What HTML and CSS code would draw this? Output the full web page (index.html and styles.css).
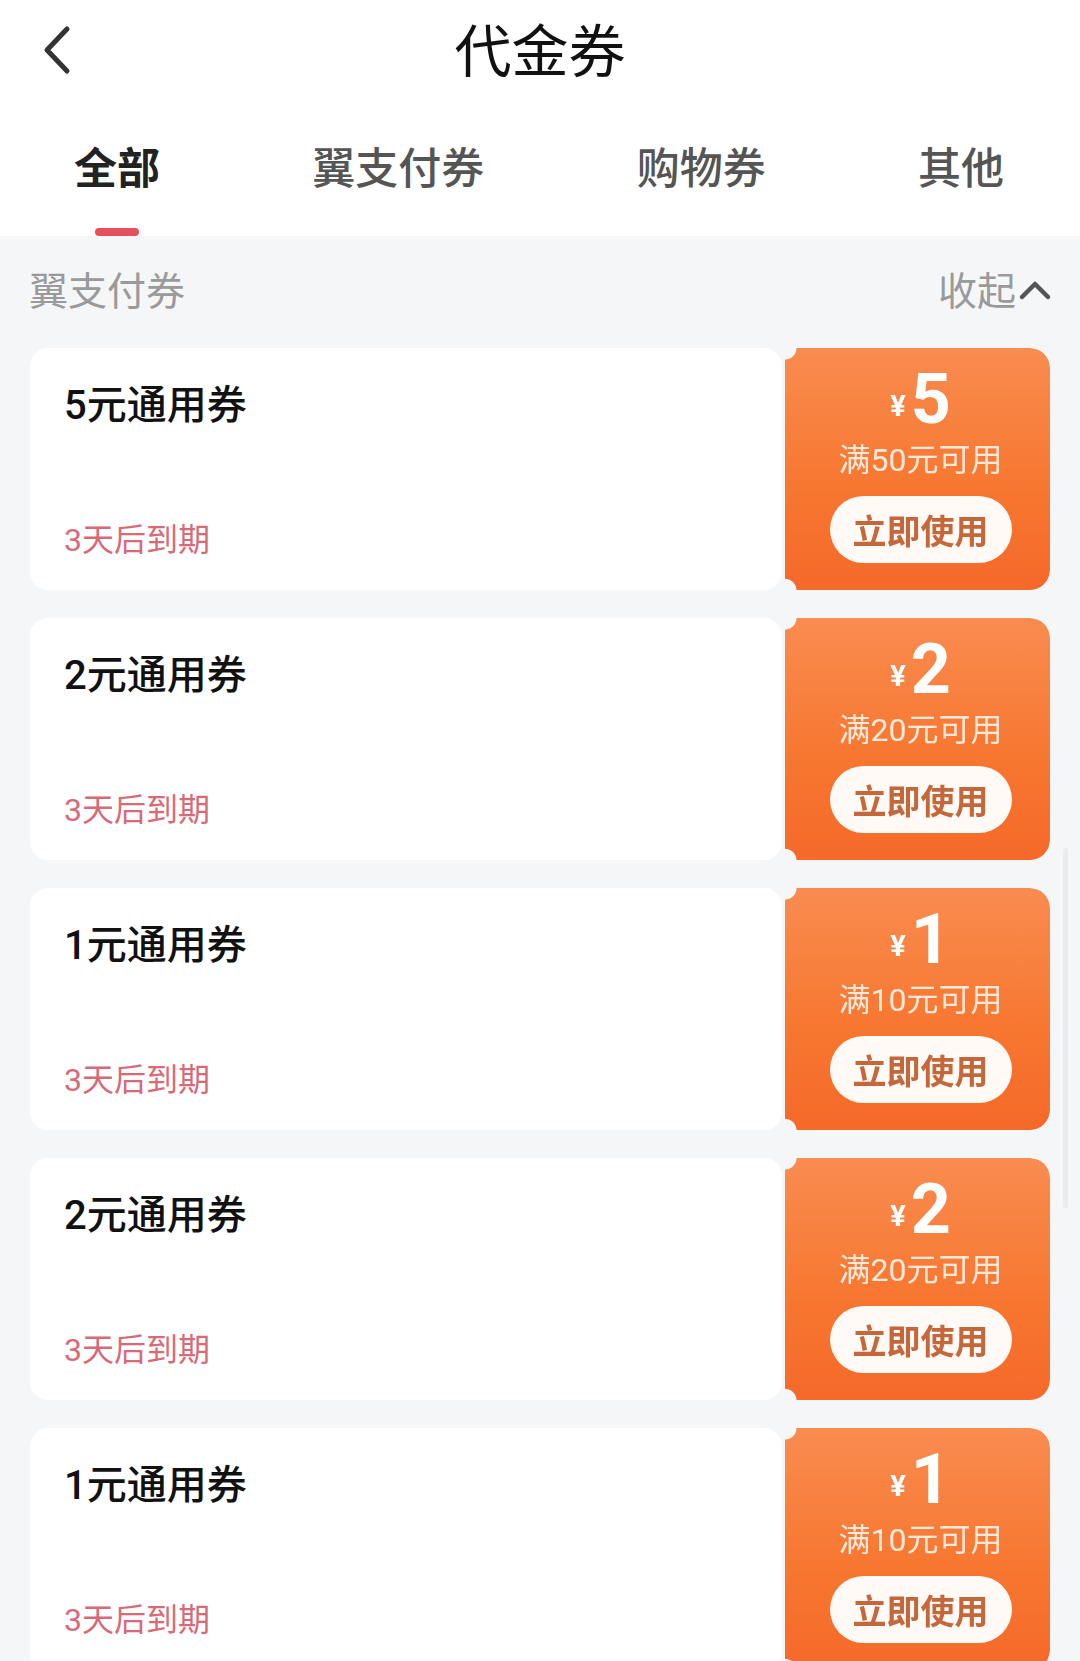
FILE: index.html
```html
<!DOCTYPE html>
<html lang="zh-CN">
<head>
<meta charset="utf-8">
<title>代金券</title>
<link rel="stylesheet" href="styles.css">
</head>
<body>
<div class="page">
  <header class="nav">
    <svg class="back" width="30" height="50" viewBox="0 0 30 50"><polyline points="24,4 4,25 24,46" fill="none" stroke="#333" stroke-width="5" stroke-linecap="round" stroke-linejoin="round"/></svg>
    <h1 class="title">代金券</h1>
  </header>
  <nav class="tabs">
    <div class="tab active"><span class="tab-label">全部</span><i class="ind"></i></div>
    <div class="tab"><span class="tab-label">翼支付券</span></div>
    <div class="tab"><span class="tab-label">购物券</span></div>
    <div class="tab"><span class="tab-label">其他</span></div>
  </nav>
  <section class="group">
    <div class="group-head">
      <span class="group-name">翼支付券</span>
      <span class="fold">收起<svg class="fold-icon" width="34" height="22" viewBox="0 0 34 22"><polyline points="4,18 17,5 30,18" fill="none" stroke="#555" stroke-width="4.5" stroke-linecap="round" stroke-linejoin="round"/></svg></span>
    </div>
    <ul class="list">
      <li class="coupon">
        <div class="info"><div class="name">5元通用券</div><div class="expire">3天后到期</div></div>
        <div class="ticket"><div class="amount"><span class="yen">¥</span><span class="num">5</span></div><div class="cond">满50元可用</div><div class="use">立即使用</div></div>
      </li>
      <li class="coupon">
        <div class="info"><div class="name">2元通用券</div><div class="expire">3天后到期</div></div>
        <div class="ticket"><div class="amount"><span class="yen">¥</span><span class="num">2</span></div><div class="cond">满20元可用</div><div class="use">立即使用</div></div>
      </li>
      <li class="coupon">
        <div class="info"><div class="name">1元通用券</div><div class="expire">3天后到期</div></div>
        <div class="ticket"><div class="amount"><span class="yen">¥</span><span class="num">1</span></div><div class="cond">满10元可用</div><div class="use">立即使用</div></div>
      </li>
      <li class="coupon">
        <div class="info"><div class="name">2元通用券</div><div class="expire">3天后到期</div></div>
        <div class="ticket"><div class="amount"><span class="yen">¥</span><span class="num">2</span></div><div class="cond">满20元可用</div><div class="use">立即使用</div></div>
      </li>
      <li class="coupon">
        <div class="info"><div class="name">1元通用券</div><div class="expire">3天后到期</div></div>
        <div class="ticket"><div class="amount"><span class="yen">¥</span><span class="num">1</span></div><div class="cond">满10元可用</div><div class="use">立即使用</div></div>
      </li>
    </ul>
  </section>
  <div class="scrollbar"></div>
</div>
</body>
</html>
```

FILE: styles.css
```css
* { box-sizing: border-box; }
html, body { margin: 0; padding: 0; }
body {
  font-family: Roboto, "Noto Sans CJK SC", sans-serif;
  background: #f5f6f8;
}
.page {
  position: relative;
  width: 1080px;
  height: 1661px;
  overflow: hidden;
  background: #f5f6f8;
}
.nav {
  height: 100px;
  background: #fff;
  display: flex;
  align-items: center;
  justify-content: center;
  position: relative;
}
.back {
  position: absolute;
  left: 43px;
  top: 25px;
}
.title {
  margin: 0 0 6px;
  font-family: "Noto Sans CJK SC", sans-serif;
  font-size: 57px;
  font-weight: 400;
  color: #111;
  line-height: 94px;
}
.tabs {
  height: 136px;
  background: #fff;
  display: flex;
  justify-content: space-between;
  align-items: flex-start;
  padding: 35px 76px 0 74px;
}
.tab {
  display: flex;
  flex-direction: column;
  align-items: center;
}
.tab-label {
  font-family: "Noto Sans CJK SC", sans-serif;
  font-size: 43px;
  line-height: 60px;
  font-weight: 500;
  color: #555;
}
.tab.active .tab-label {
  font-weight: 700;
  color: #222;
}
.ind {
  display: block;
  margin-top: 33px;
  width: 44px;
  height: 8px;
  border-radius: 4px;
  background: #e4505c;
}
.group-head {
  height: 108px;
  display: flex;
  align-items: center;
  justify-content: space-between;
  padding: 0 28px 4px 29px;
}
.group-name, .fold {
  font-family: "Noto Sans CJK SC", sans-serif;
  font-size: 39px;
  color: #9a9a9a;
  line-height: 50px;
}
.fold {
  display: flex;
  align-items: center;
}
.fold-icon {
  margin-left: 2px;
  margin-top: 4px;
}
.list {
  list-style: none;
  margin: 0;
  padding: 4px 0 0 30px;
  display: flex;
  flex-direction: column;
  gap: 28px;
}
.coupon {
  display: flex;
  height: 242px;
  gap: 3px;
}
.info {
  width: 752px;
  background: #fff;
  border-radius: 18px;
  display: flex;
  flex-direction: column;
  justify-content: space-between;
  padding: 34px 0 30px 34px;
}
.name {
  font-size: 40px;
  line-height: 48px;
  font-weight: 500;
  color: #111;
}
.expire {
  font-size: 32px;
  line-height: 40px;
  color: #d86a78;
}
.ticket {
  width: 265px;
  border-radius: 0 20px 20px 0;
  background: linear-gradient(180deg, #f98c50 0%, #f7762f 60%, #f5692a 100%);
  -webkit-mask:
    radial-gradient(circle at 0 0, transparent 11px, #000 12px) top left / 100% 51% no-repeat,
    radial-gradient(circle at 0 100%, transparent 11px, #000 12px) bottom left / 100% 51% no-repeat;
  mask:
    radial-gradient(circle at 0 0, transparent 11px, #000 12px) top left / 100% 51% no-repeat,
    radial-gradient(circle at 0 100%, transparent 11px, #000 12px) bottom left / 100% 51% no-repeat;
  display: flex;
  flex-direction: column;
  align-items: center;
  padding: 18px 0 0 6px;
}
.amount {
  color: #fff;
  font-weight: 700;
  line-height: 66px;
  height: 66px;
  display: flex;
  align-items: baseline;
}
.yen {
  font-size: 29px;
  margin-right: 5px;
  position: relative;
  top: -7px;
}
.num {
  font-size: 70px;
}
.cond {
  margin-top: 8px;
  font-size: 32px;
  line-height: 40px;
  color: #ffe9da;
}
.use {
  margin-top: 16px;
  width: 182px;
  height: 67px;
  border-radius: 34px;
  background: #fffaf6;
  color: #c4683c;
  font-family: "Noto Sans CJK SC", sans-serif;
  font-size: 34px;
  font-weight: 700;
  line-height: 67px;
  text-align: center;
}
.scrollbar {
  position: absolute;
  right: 12px;
  top: 848px;
  width: 5px;
  height: 360px;
  border-radius: 3px;
  background: rgba(0, 0, 0, 0.045);
}
```
